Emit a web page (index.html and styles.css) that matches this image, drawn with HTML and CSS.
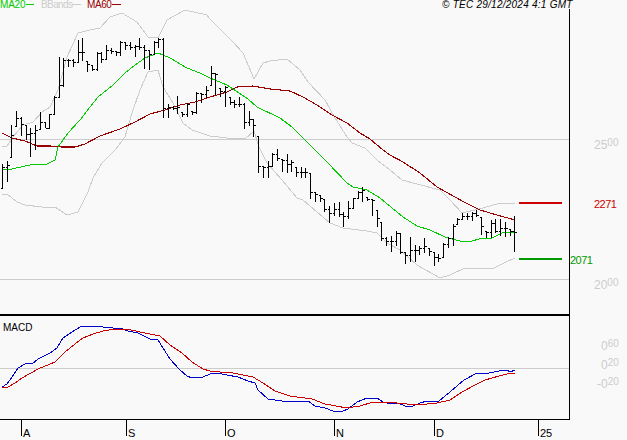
FILE: index.html
```html
<!DOCTYPE html>
<html>
<head>
  <link rel="stylesheet" href="styles.css">
</head>
<body>
  <svg id="chart" class="chart" width="627" height="440" viewBox="0 0 627 440">
    <!-- grid -->
    <path class="grid" d="M0 139.5H569M0 279.5H569M0 368.5H569"/>

    <!-- bollinger bands -->
    <polyline class="band" points="2,147 7,146 13,137 23,125 33,122 42,112 50,107 58,90 67,57 78,33 90,30 100,28 110,17 122,13 137,22 148,37 158,38 167,20 185,10 207,15 210,19 223,32 233,42 243,53 254,79 263,63 270,61 287,59 300,70 308,82 325,100 335,118 347,137 352,143 365,148 377,160 390,170 402,180 417,184 440,190 450,200 462,213 479,209 497,204 515,203"/>
    <polyline class="band" points="2,195 7,194 17,202 25,205 42,207 55,207 67,215 78,212 88,192 93,178 102,163 115,150 125,137 132,113 140,90 148,72 158,70 163,87 173,103 183,123 192,130 210,136 227,138 245,139 254,131 259,147 267,163 282,180 297,198 303,200 317,212 330,223 343,228 367,231 377,233 387,243 400,250 417,265 440,278 450,275 465,268 492,269 504,263 515,258"/>

    <!-- moving averages -->
    <polyline class="ma60" points="2,133 12,138 25,141 37,146 50,146 62,147 75,147 85,144 100,136 120,129 135,122 150,114 165,110 180,105 195,102 210,97 227,92 237,87 253,86 270,89 290,91 303,97 317,105 332,115 347,123 360,133 370,139 383,150 390,155 403,162 420,173 437,187 464,202 480,210 497,215 515,220"/>
    <polyline class="ma20" points="2,170 12,169 25,166 35,164 45,165 55,160 58,147 68,133 80,120 90,107 98,97 113,85 125,73 135,65 145,58 158,53 170,58 187,68 200,73 210,78 227,85 248,99 257,107 280,118 292,127 307,142 313,148 327,162 347,183 353,187 367,190 380,198 403,217 417,226 430,230 445,237 460,241 472,241 479,239 492,238 502,233 514,232"/>

    <!-- bars filled in by script.js -->
    <path id="bars" class="bars" d=""/>

    <!-- target levels -->
    <path class="level-red" d="M519 202.5H562"/>
    <path class="level-green" d="M519 258.5H562"/>
    <text class="price price-red" x="594" y="208">2271</text>
    <text class="price price-green" x="570" y="264">2071</text>

    <!-- macd -->
    <polyline class="macd-blue" points="2,387 7,384 12,377 18,368 27,363 32,364 38,359 50,353 57,348 63,338 72,332 80,327 88,326 93,327 98,326 103,327 113,328 123,329 128,331 138,333 150,339 158,340 163,348 170,359 180,370 187,376 192,378 203,377 210,374 217,373 227,375 238,377 248,381 255,383 258,390 268,399 282,401 297,402 308,401 315,406 325,408 333,411 343,411 348,409 357,402 367,398 377,398 383,402 392,404 398,403 405,406 413,406 420,403 427,401 439,401 450,392 464,380 477,373 489,373 499,371 507,370 510,372 515,370"/>
    <polyline class="macd-red" points="2,388 8,387 15,383 22,378 38,369 55,362 65,352 75,344 83,338 93,334 103,331 115,329 127,329 140,332 160,336 170,345 182,353 192,362 203,369 210,371 220,372 233,373 253,377 263,383 275,391 290,396 312,399 325,404 347,408 360,406 373,402 397,403 407,404 417,405 437,403 450,400 462,392 475,385 485,380 499,376 507,374 515,373"/>

    <!-- frame and axis -->
    <path class="axis" d="M569.5 9V419.5M0 419.5H569.5"/>
    <path class="divider" d="M0 315H570"/>
    <path class="axis" d="M21.5 419V436M126.5 419V436M225.5 419V436M334.5 419V436M434.5 419V436M538.5 419V436"/>

    <!-- legend -->
    <text class="legend legend-green" x="0" y="8">MA20</text>
    <path class="key-green" d="M26 4.5H34"/>
    <text class="legend legend-gray" x="41" y="8">BBands</text>
    <path class="key-gray" d="M72 4.5H81"/>
    <text class="legend legend-darkred" x="87" y="8">MA60</text>
    <path class="key-darkred" d="M112 4.5H121"/>
    <text class="copyright" x="442" y="8">© TEC 29/12/2024 4:1 GMT</text>
    <text class="macd-label" x="3" y="331">MACD</text>

    <!-- time labels -->
    <text class="month" x="23" y="437">A</text>
    <text class="month" x="128" y="437">S</text>
    <text class="month" x="227" y="437">O</text>
    <text class="month" x="336" y="437">N</text>
    <text class="month" x="436" y="437">D</text>
    <text class="month" x="540" y="437">25</text>

    <!-- right scale -->
    <text class="scale" x="594" y="149">25<tspan class="scale-small" dy="-3">00</tspan></text>
    <text class="scale" x="594" y="289">20<tspan class="scale-small" dy="-3">00</tspan></text>
    <text class="scale" x="601" y="350">0<tspan class="scale-small" dy="-3">60</tspan></text>
    <text class="scale" x="601" y="369">0<tspan class="scale-small" dy="-3">20</tspan></text>
    <text class="scale" x="597" y="388">-0<tspan class="scale-small" dy="-3">20</tspan></text>
  </svg>
  <script src="script.js"></script>
</body>
</html>
```

FILE: styles.css
```css
body {
  margin: 0;
  background-color: #f9f9f9;
}

.chart {
  display: block;
  shape-rendering: crispEdges;
  font-family: "Liberation Sans", Arial, sans-serif;
}

polyline,
path {
  fill: none;
}

.grid {
  stroke: #cccccc;
  stroke-width: 1;
}

.band {
  stroke: #cccccc;
  stroke-width: 1;
}

.ma20 {
  stroke: #00cc00;
  stroke-width: 1;
}

.ma60 {
  stroke: #990000;
  stroke-width: 1.1;
}

.bars {
  stroke: #000000;
  stroke-width: 1;
}

.level-red {
  stroke: #cc0000;
  stroke-width: 2;
}

.level-green {
  stroke: #009900;
  stroke-width: 2;
}

.macd-blue {
  stroke: #0000cc;
  stroke-width: 1;
}

.macd-red {
  stroke: #cc0000;
  stroke-width: 1;
}

.axis {
  stroke: #000000;
  stroke-width: 1;
}

.divider {
  stroke: #000000;
  stroke-width: 2;
}

.key-green {
  stroke: #00cc00;
}

.key-gray {
  stroke: #cccccc;
}

.key-darkred {
  stroke: #990000;
}

.legend {
  font-size: 10px;
}

.legend-green {
  fill: #00cc00;
  letter-spacing: -0.2px;
}

.legend-gray {
  fill: #cccccc;
  letter-spacing: -0.6px;
}

.legend-darkred {
  fill: #990000;
  letter-spacing: -0.4px;
}

.copyright {
  font-size: 10px;
  font-style: italic;
  letter-spacing: 0.25px;
  fill: #000000;
}

.macd-label {
  font-size: 10px;
  fill: #000000;
}

.month {
  font-size: 11px;
  fill: #000000;
}

.price {
  font-size: 11px;
  letter-spacing: -0.5px;
}

.price-red {
  fill: #cc0000;
}

.price-green {
  fill: #009900;
}

.scale {
  font-size: 12px;
  fill: #cccccc;
}

.scale-small {
  font-size: 10px;
}
```

FILE: script.js
```js
// high, low, close for each trading day, in pixels
const days = [
  [164,188,167],[161,182,165],[125,157,135],[111,126,118],[117,136,124],[125,140,134],[128,157,133],[125,150,130],[112,129,122],[122,128,128],
  [114,128,114],[96,115,97],[57,98,85],[58,87,60],[59,67,60],[59,67,62],[40,63,52],[38,61,52],[61,72,64],[65,71,69],
  [52,71,53],[52,63,59],[45,59,50],[48,54,51],[51,56,52],[41,56,42],[42,50,45],[42,50,47],[45,57,46],[38,50,47],
  [45,69,50],[50,70,54],[41,54,42],[38,48,39],[38,118,108],[104,118,107],[106,110,108],[96,114,107],[112,117,114],[103,117,104],
  [111,115,112],[92,114,93],[93,103,94],[86,98,90],[66,85,73],[73,95,74],[88,97,91],[86,107,87],[97,105,102],[100,108,104],
  [97,107,104],[103,129,122],[111,126,119],[119,137,125],[136,173,166],[166,178,167],[161,178,166],[153,167,154],[149,161,158],[159,172,160],
  [154,173,164],[160,172,162],[167,177,172],[167,178,172],[168,178,172],[173,199,192],[192,202,194],[195,202,198],[199,212,209],[206,223,213],
  [203,216,209],[202,217,214],[212,227,216],[201,219,208],[198,208,198],[191,199,192],[187,202,190],[197,201,199],[199,216,200],[210,227,218],
  [222,241,238],[237,246,241],[236,252,241],[231,246,233],[233,254,252],[252,264,255],[237,262,250],[245,262,250],[246,255,248],[238,253,246],
  [248,256,251],[252,266,257],[254,262,258],[243,257,244],[237,248,238],[224,246,226],[218,224,219],[213,220,216],[213,220,216],[212,221,213],
  [210,217,215],[217,235,226],[231,238,232],[220,238,223],[219,233,231],[219,236,228],[222,237,228],[229,236,231],[216,252,232]
];

let d = "";
let prevClose = days[0][1];
days.forEach(function (day, i) {
  const x = Math.floor(2.3 + i * 4.745) + 0.5;
  const open = Math.min(Math.max(prevClose, day[0]), day[1]);
  d += `M${x} ${day[0]}V${day[1]}`;
  d += `M${x - 2} ${open + 0.5}H${x}`;
  d += `M${x} ${day[2] + 0.5}H${x + 2}`;
  prevClose = day[2];
});
document.getElementById("bars").setAttribute("d", d);
```
